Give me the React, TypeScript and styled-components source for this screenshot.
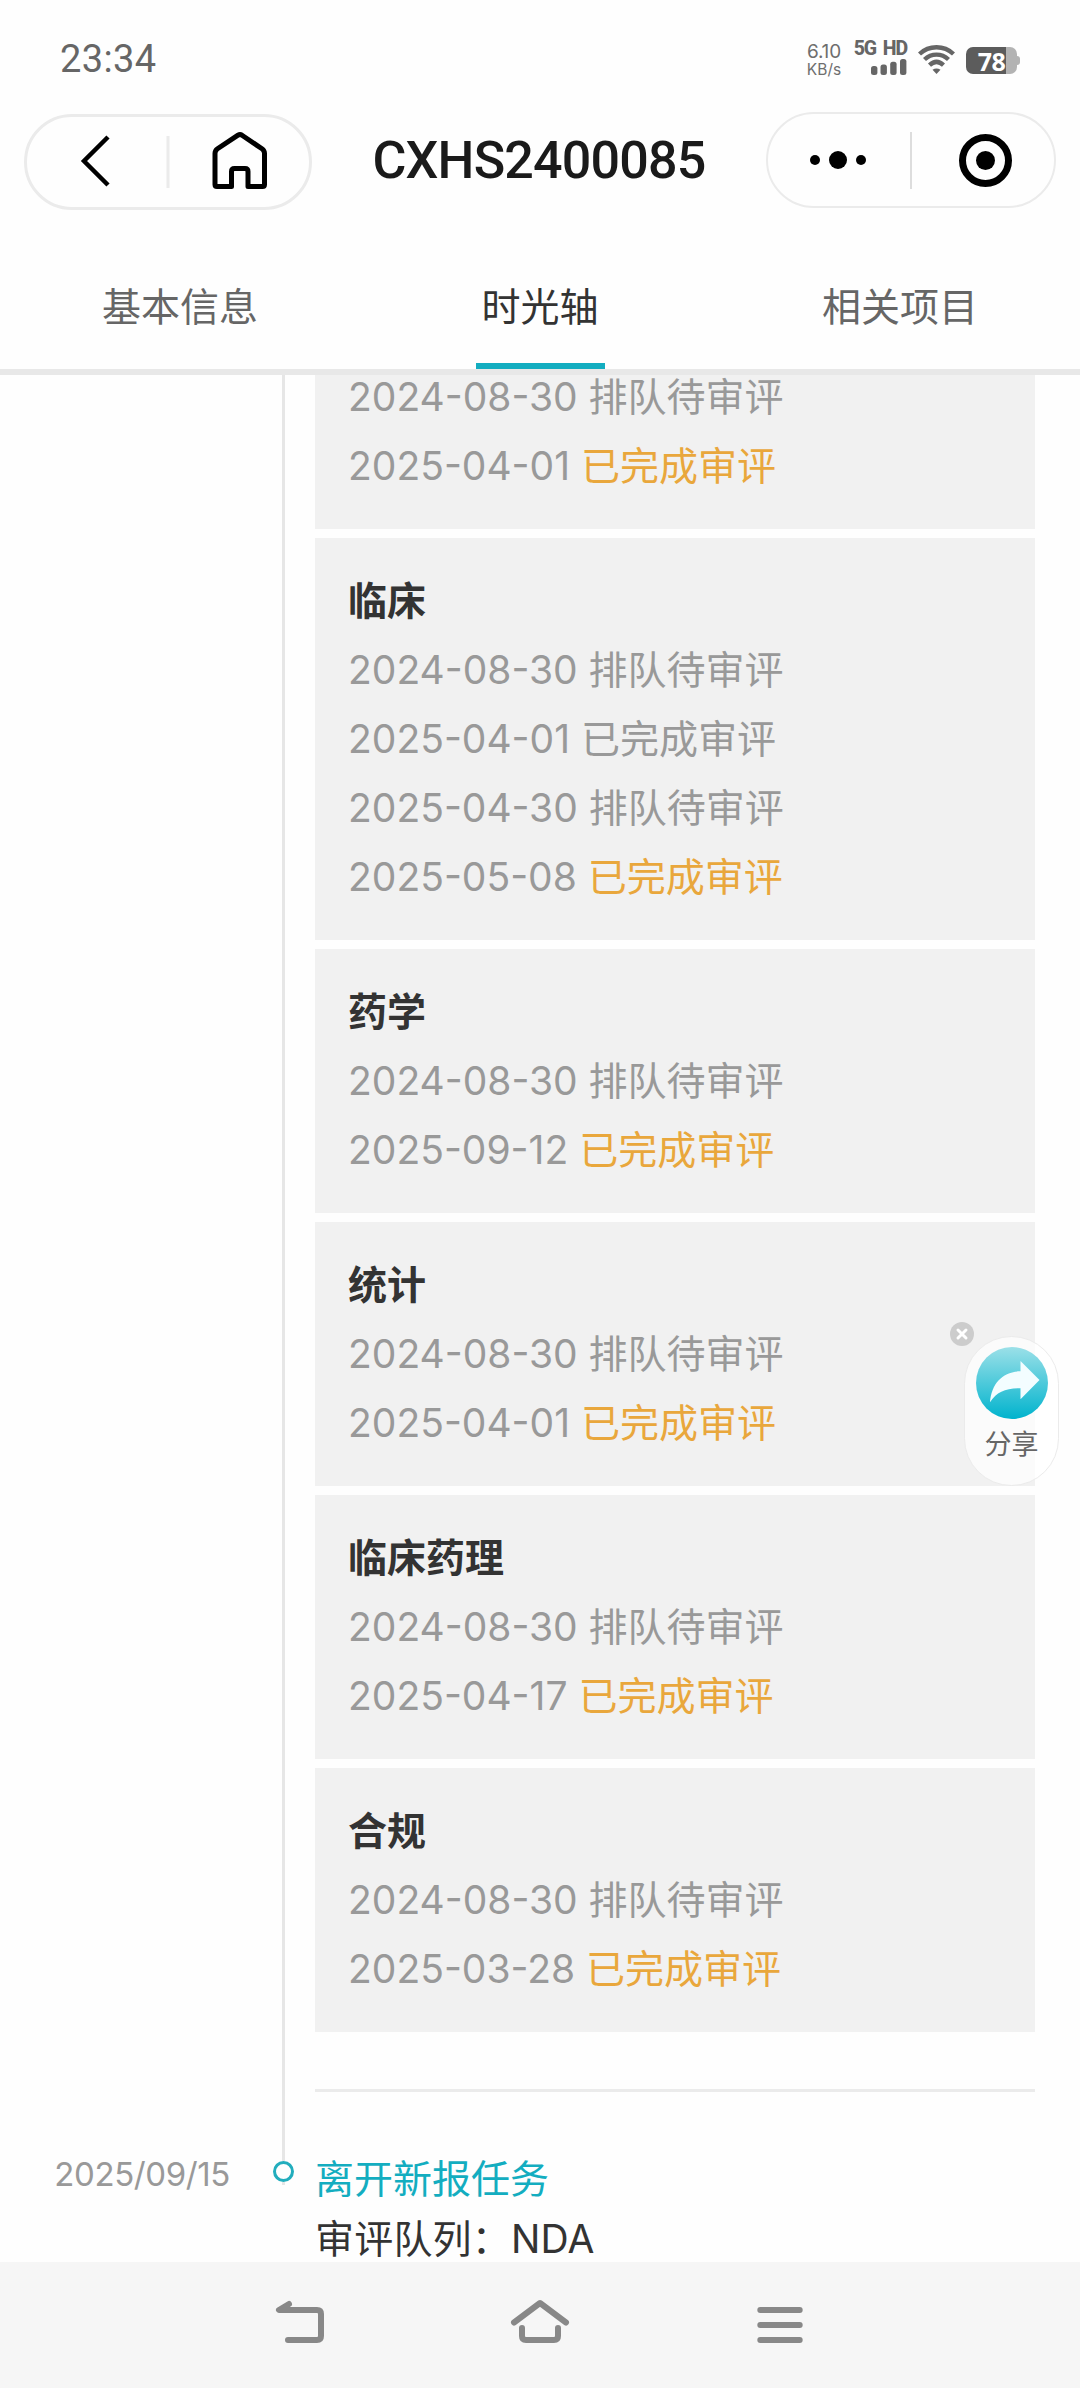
import React from 'react';
import styled, { createGlobalStyle } from 'styled-components';

const teal = '#13adc0';

const GlobalStyle = createGlobalStyle`
  * { box-sizing: border-box; }
  body {
    margin: 0;
    background: #fff;
    font-family: Inter, "Noto Sans CJK SC", sans-serif;
  }
`;

const Screen = styled.div`
  width: 1080px;
  height: 2388px;
  display: flex;
  flex-direction: column;
  overflow: hidden;
  background: #fefefe;
`;

/* ---------- status bar ---------- */

const StatusBar = styled.header`
  height: 112px;
  flex: none;
  display: flex;
  justify-content: space-between;
  padding: 40px 60px 0 60px;
  color: #666;
`;

const Clock = styled.span`
  font-family: Roboto, sans-serif;
  font-size: 38px;
  line-height: 39px;
  letter-spacing: 0.4px;
`;

const StatusIcons = styled.div`
  display: flex;
  align-items: flex-start;
`;

const Speed = styled.div`
  width: 38px;
  margin-right: 14px;
  display: flex;
  flex-direction: column;
  align-items: center;
  color: #6e6e6e;
`;

const SpeedValue = styled.span`
  font-size: 19px;
  line-height: 24px;
  letter-spacing: -0.2px;
`;

const SpeedUnit = styled.span`
  font-size: 15.5px;
  line-height: 12px;
`;

const Cellular = styled.div`
  width: 50px;
  margin-right: 11px;
  display: flex;
  flex-direction: column;
  align-items: flex-end;
`;

const CellularLabel = styled.span`
  font: 800 19.5px/18px Roboto, sans-serif;
  letter-spacing: -1.1px;
  white-space: nowrap;
  word-spacing: 3px;
`;

const Wifi = styled.svg`
  margin: 4px 11px 0 0;
`;

const Battery = styled.div`
  display: flex;
  align-items: center;
  padding-top: 7px;
`;

const BatteryCell = styled.div`
  width: 51px;
  height: 27px;
  border-radius: 7px;
  background: linear-gradient(to right, #5c5c5c 40px, #b3b3b3 40px);
  color: #fff;
  font: 700 25px/28px "Noto Sans", sans-serif;
  letter-spacing: -0.5px;
  text-align: center;
`;

const BatteryNub = styled.div`
  width: 3px;
  height: 9px;
  border-radius: 0 3px 3px 0;
  background: #b3b3b3;
`;

/* ---------- title bar ---------- */

const TitleBar = styled.div`
  height: 124px;
  flex: none;
  display: flex;
  justify-content: space-between;
  align-items: flex-start;
  padding: 0 24px;
`;

const Capsule = styled.div<{ $width: number; $line: number; $top: number }>`
  width: ${p => p.$width}px;
  height: 96px;
  margin-top: ${p => p.$top}px;
  border: ${p => p.$line}px solid #ebebeb;
  border-radius: 48px;
  display: flex;
  align-items: center;
  justify-content: center;
`;

const Title = styled.h1`
  margin: 18px 0 0;
  font-family: Roboto, sans-serif;
  font-size: 52px;
  line-height: 62px;
  font-weight: 500;
  letter-spacing: -0.8px;
  color: #1a1a1a;
`;

/* ---------- tabs ---------- */

const Tabs = styled.nav`
  height: 139px;
  flex: none;
  display: grid;
  grid-template-columns: repeat(3, 1fr);
  border-bottom: 6px solid #e8e8e8;
`;

const Tab = styled.div<{ $active?: boolean }>`
  display: flex;
  flex-direction: column;
  align-items: center;
  justify-content: space-between;
  padding-top: 41px;
  font-size: 39px;
  line-height: 60px;
  color: ${p => (p.$active ? '#333' : '#666')};
`;

const TabMarker = styled.div`
  width: 129px;
  height: 6px;
  background: ${teal};
`;

/* ---------- timeline ---------- */

const Timeline = styled.main`
  height: 1887px;
  flex: none;
  overflow: hidden;
`;

const Entry = styled.section`
  display: grid;
  grid-template-columns: 273px 21px 1fr;
`;

const EntryDate = styled.time`
  padding: 58px 43px 0 0;
  text-align: right;
  font-size: 33px;
  line-height: 48px;
  letter-spacing: -0.4px;
  color: #999;
  white-space: nowrap;
`;

const Rail = styled.div`
  display: flex;
  flex-direction: column;
  align-items: center;
`;

const RailLine = styled.div<{ $height?: number }>`
  width: 3px;
  ${p => (p.$height ? `height: ${p.$height}px;` : 'flex: 1;')}
  background: #e6e6e6;
`;

const RailDot = styled.div`
  width: 21px;
  height: 21px;
  border: 3px solid #22adbd;
  border-radius: 50%;
`;

const Content = styled.div`
  padding: 0 45px 0 21px;
`;

const Cards = styled.div`
  display: flex;
  flex-direction: column;
  gap: 9px;
  margin-top: -13px;
  padding-bottom: 57px;
  border-bottom: 3px solid #ebebeb;
`;

const Card = styled.article<{ $continued?: boolean }>`
  padding: ${p => (p.$continued ? 0 : 28)}px 33px 29px;
  background: #f1f1f1;
`;

const CardTitle = styled.h2`
  margin: 0;
  font-size: 39px;
  line-height: 69px;
  font-weight: 700;
  color: #333;
`;

const Record = styled.p`
  margin: 0;
  font-size: 39px;
  line-height: 69px;
  color: #999;
  white-space: pre;
`;

const Status = styled.span<{ $done?: boolean }>`
  color: ${p => (p.$done ? '#e9a73c' : 'inherit')};
`;

const EntryBody = styled.div`
  padding-top: 57px;
`;

const EntryTitle = styled.h3`
  margin: 0;
  font-size: 39px;
  font-weight: 400;
  line-height: 60px;
  color: ${teal};
`;

const EntryText = styled.p`
  margin: 0;
  font-size: 39px;
  line-height: 60px;
  letter-spacing: 0.2px;
  color: #333;
`;

/* ---------- floating share button ---------- */

const ShareButton = styled.div`
  position: absolute;
  left: 964px;
  top: 1336px;
  width: 95px;
  height: 150px;
  border: 1px solid #ebebeb;
  border-radius: 48px;
  background: rgba(255, 255, 255, 0.7);
  display: flex;
  flex-direction: column;
  align-items: center;
  padding-top: 9px;
`;

const ShareLabel = styled.span`
  font-size: 27px;
  line-height: 40px;
  margin-top: 5px;
  color: #666;
`;

const ShareClose = styled.svg`
  position: absolute;
  left: 950px;
  top: 1322px;
`;

/* ---------- system navigation ---------- */

const NavBar = styled.footer`
  height: 126px;
  flex: none;
  display: flex;
  justify-content: center;
  gap: 180px;
  padding-top: 33px;
  background: #f6f6f6;
`;

const NavIcon = styled.svg`
  fill: none;
  stroke: #888;
  stroke-width: 6;
  stroke-linecap: round;
  stroke-linejoin: round;
`;

type Row = [date: string, status: string, done?: boolean];

const queued = '排队待审评';
const finished = '已完成审评';

const groups: { title?: string; rows: Row[] }[] = [
  { rows: [['2024-08-30', queued], ['2025-04-01', finished, true]] },
  {
    title: '临床',
    rows: [
      ['2024-08-30', queued],
      ['2025-04-01', finished],
      ['2025-04-30', queued],
      ['2025-05-08', finished, true],
    ],
  },
  { title: '药学', rows: [['2024-08-30', queued], ['2025-09-12', finished, true]] },
  { title: '统计', rows: [['2024-08-30', queued], ['2025-04-01', finished, true]] },
  { title: '临床药理', rows: [['2024-08-30', queued], ['2025-04-17', finished, true]] },
  { title: '合规', rows: [['2024-08-30', queued], ['2025-03-28', finished, true]] },
];

export default function App() {
  return (
    <Screen>
      <GlobalStyle />
      <StatusBar>
        <Clock>23:34</Clock>
        <StatusIcons>
          <Speed>
            <SpeedValue>6.10</SpeedValue>
            <SpeedUnit>KB/s</SpeedUnit>
          </Speed>
          <Cellular>
            <CellularLabel>5G HD</CellularLabel>
            <svg width="36" height="17" viewBox="0 0 36 17" fill="#666">
              <rect x="0" y="8" width="6.4" height="9" rx="2.5" />
              <rect x="9.5" y="6.5" width="6.4" height="10.5" rx="2.5" />
              <rect x="19.2" y="3.7" width="6.4" height="13.3" rx="2.5" />
              <rect x="29" y="1" width="6.4" height="16" rx="2.5" />
            </svg>
          </Cellular>
          <Wifi width="37" height="31" viewBox="0 0 37 31" fill="none" stroke="#666" strokeWidth="4.4">
            <path d="M1.5 10C11 1 26 1 35.5 10" />
            <path d="M6.5 15.5C13.5 9 23.5 9 30.5 15.5" />
            <path d="M11.5 21.200C16 17 21 17 25.500 21.200" />
            <path d="M18.500 30L14.500 25.800Q18.500 23 22.500 25.800Z" fill="#666" stroke="none" />
          </Wifi>
          <Battery>
            <BatteryCell>78</BatteryCell>
            <BatteryNub />
          </Battery>
        </StatusIcons>
      </StatusBar>

      <TitleBar>
        <Capsule $width={288} $line={3} $top={2}>
          <svg width="282" height="90" viewBox="27 117 282 90" fill="none" stroke="#000">
            <path d="M108 137L84 161L108 185" strokeWidth="4.500" />
            <path d="M168 136V188" stroke="#ebebeb" strokeWidth="3" />
            <path
              d="M238 135.200Q240 134 242 135.200L262 148.800Q264.500 150.500 264.500 153.500V184.500Q264.500 186.500 262.500 186.500H248V171.500Q248 168.500 245 168.500H234.500Q231.500 168.500 231.500 171.500V186.500H217Q215 186.500 215 184.500V153.500Q215 150.500 217.500 148.800Z"
              strokeWidth="5"
              strokeLinejoin="round"
            />
          </svg>
        </Capsule>
        <Title>CXHS2400085</Title>
        <Capsule $width={290} $line={2} $top={0}>
          <svg width="286" height="92" viewBox="768 114 286 92">
            <circle cx="815" cy="160" r="5" />
            <circle cx="838" cy="160" r="9" />
            <circle cx="861" cy="160" r="5" />
            <path d="M911 132V189" stroke="#ddd" strokeWidth="2" />
            <circle cx="985.500" cy="160.500" r="23" fill="none" stroke="#000" strokeWidth="7" />
            <circle cx="985.500" cy="160.500" r="9.500" />
          </svg>
        </Capsule>
      </TitleBar>

      <Tabs>
        <Tab>基本信息</Tab>
        <Tab $active>
          时光轴
          <TabMarker />
        </Tab>
        <Tab>相关项目</Tab>
      </Tabs>

      <Timeline>
        <Entry>
          <span />
          <Rail>
            <RailLine />
          </Rail>
          <Content>
            <Cards>
              {groups.map((group, i) => (
                <Card key={i} $continued={!group.title}>
                  {group.title && <CardTitle>{group.title}</CardTitle>}
                  {group.rows.map(([date, status, done]) => (
                    <Record key={date}>
                      {date} <Status $done={done}>{status}</Status>
                    </Record>
                  ))}
                </Card>
              ))}
            </Cards>
          </Content>
        </Entry>
        <Entry>
          <EntryDate>2025/09/15</EntryDate>
          <Rail>
            <RailLine $height={69} />
            <RailDot />
            <RailLine $height={3} />
          </Rail>
          <Content>
            <EntryBody>
              <EntryTitle>离开新报任务</EntryTitle>
              <EntryText>审评队列：NDA</EntryText>
            </EntryBody>
          </Content>
        </Entry>
      </Timeline>

      <NavBar>
        <NavIcon width="60" height="60" viewBox="270 2295 60 60">
          <path d="M289 2304L279 2310H317Q321 2310 321 2314V2336Q321 2340 317 2340H288" />
        </NavIcon>
        <NavIcon width="60" height="60" viewBox="510 2295 60 60">
          <path d="M514 2322.500L540 2303L566 2322.500M522 2328V2336Q522 2340 526 2340H554Q558 2340 558 2336V2328" />
        </NavIcon>
        <NavIcon width="60" height="60" viewBox="750 2295 60 60">
          <path d="M760.300 2310H799.700M760.300 2325H799.700M760.300 2340H799.700" />
        </NavIcon>
      </NavBar>

      <ShareButton>
        <svg width="74" height="74" viewBox="0 0 74 74">
          <defs>
            <linearGradient id="share" x1="0" y1="0" x2="0" y2="1">
              <stop offset="0" stopColor="#9be0e8" />
              <stop offset="1" stopColor="#00b3cd" />
            </linearGradient>
          </defs>
          <circle cx="37" cy="37" r="36" fill="url(#share)" />
          <path d="M64.500 34L45.500 15V25.300C28 25.500 16.500 37 15 56.300C21.500 46 31 42 45.500 42.300V53.300Z" fill="#f3fdff" />
        </svg>
        <ShareLabel>分享</ShareLabel>
      </ShareButton>
      <ShareClose width="24" height="24" viewBox="0 0 24 24">
        <circle cx="12" cy="12" r="12" fill="#ccc" />
        <path d="M8 8L16 16M16 8L8 16" stroke="#fff" strokeWidth="3" strokeLinecap="round" />
      </ShareClose>
    </Screen>
  );
}
